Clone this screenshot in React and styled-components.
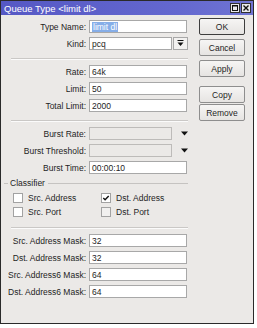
import React from 'react'
import styled, { createGlobalStyle } from 'styled-components'

const Global = createGlobalStyle`
  html, body {
    margin: 0;
    padding: 0;
    background: #fff;
  }
  body {
    font-family: "Liberation Sans", Arial, sans-serif;
    font-size: 8.5px;
    color: #1e1e1e;
  }
`

const Window = styled.div`
  box-sizing: border-box;
  width: 254px;
  height: 324px;
  border: 1px solid #2a2a2a;
  background: #ebe9e7;
  display: flex;
  flex-direction: column;
`

const TitleBar = styled.div`
  height: 14px;
  background: linear-gradient(to right, #5558c4, #6468cf 70%, #6f74d3);
  color: #fff;
  display: flex;
  align-items: center;
  padding: 0 2px 0 3px;
  font-size: 9.5px;
`

const TitleText = styled.span`
  flex: 1;
`

const TitleButton = styled.div`
  box-sizing: border-box;
  width: 10px;
  height: 10px;
  margin-left: 1px;
  background: #e9e9ec;
  border: 1px solid #303030;
  display: flex;
  align-items: center;
  justify-content: center;
`

const Body = styled.div`
  display: flex;
`

const FormColumn = styled.div`
  width: 187px;
  padding-top: 5px;
`

const ButtonColumn = styled.div`
  width: 46px;
  margin-left: 11px;
  padding-top: 3px;
  display: flex;
  flex-direction: column;
`

const DialogButton = styled.div`
  box-sizing: border-box;
  height: 17px;
  margin-top: ${p => p.$gap}px;
  border: 1px solid ${p => (p.$primary ? '#3d3d3d' : '#8e8e8e')};
  border-radius: 2px;
  background: linear-gradient(#f6f5f4, #e6e4e2);
  display: flex;
  align-items: center;
  justify-content: center;
  font-size: 8.5px;
`

const Row = styled.div`
  display: grid;
  grid-template-columns: 85px 83px 15px;
  column-gap: 3px;
  align-items: center;
  height: 13px;
  margin-bottom: 4px;
`

const Label = styled.span`
  text-align: right;
  white-space: nowrap;
`

const Input = styled.div`
  box-sizing: border-box;
  height: 13px;
  grid-column: ${p => (p.$wide ? '2 / 4' : '2')};
  width: ${p => (p.$wide ? 98 : 83)}px;
  background: ${p => (p.$disabled ? '#ebe9e7' : '#fff')};
  border: 1px solid ${p => (p.$disabled ? '#bdbbb9' : '#a8a8a8')};
  padding-left: 2px;
  display: flex;
  align-items: center;
  white-space: nowrap;
`

const Selected = styled.span`
  background: #86aee8;
  color: #fff;
  padding: 0 1px;
`

const DropButton = styled.div`
  box-sizing: border-box;
  margin-left: -2px;
  width: 15px;
  height: 13px;
  border: 1px solid #a8a8a8;
  background: #f2f1f0;
  display: flex;
  align-items: center;
  justify-content: center;
`

const DropArrow = styled.div`
  display: flex;
  align-items: center;
  justify-content: center;
  margin-left: 4px;
`

const Separator = styled.div`
  margin: 8px 0 5px 10px;
  width: 177px;
  border-top: 1px solid #cac8c6;
  border-bottom: 1px solid #fbfbfb;
`

const GroupTitle = styled.div`
  margin: 4px 0 5px 3px;
  display: flex;
  align-items: center;
  height: 10px;
  &::before {
    content: '';
    width: 4px;
    border-top: 1px solid #c5c3c1;
    margin-right: 2px;
  }
  &::after {
    content: '';
    flex: 1;
    border-top: 1px solid #c5c3c1;
    margin-left: 3px;
  }
`

const CheckGrid = styled.div`
  display: grid;
  grid-template-columns: 88px 88px;
  row-gap: 4px;
  padding-left: 12px;
`

const CheckItem = styled.label`
  display: flex;
  align-items: center;
  gap: 5px;
  height: 10px;
`

const Box = styled.span`
  box-sizing: border-box;
  width: 10px;
  height: 10px;
  border: 1px solid #a2a2a2;
  background: ${p => (p.$dim ? '#f1f0ef' : '#fff')};
  display: flex;
  align-items: center;
  justify-content: center;
`

const GroupEnd = styled(Separator)`
  margin-top: 10px;
`

const Field = ({ label, value, selected, disabled, drop }) => (
  <Row>
    <Label>{label}</Label>
    <Input $wide={!drop} $disabled={disabled}>
      {selected ? <Selected>{value}</Selected> : value}
    </Input>
    {drop === 'button' && (
      <DropButton>
        <svg width="7" height="7" viewBox="0 0 7 7">
          <rect x="0.5" y="0" width="6" height="1" fill="#111" />
          <path d="M0.5 2.5 H6.5 L3.5 6 Z" fill="#111" />
        </svg>
      </DropButton>
    )}
    {drop === 'arrow' && (
      <DropArrow>
        <svg width="7" height="5" viewBox="0 0 7 5">
          <path d="M0 0.5 H7 L3.5 4.5 Z" fill="#111" />
        </svg>
      </DropArrow>
    )}
  </Row>
)

const Check = ({ label, checked, dim }) => (
  <CheckItem>
    <Box $dim={dim}>
      {checked && (
        <svg width="8" height="8" viewBox="0 0 8 8">
          <path d="M1.3 4 L3.1 5.8 L6.7 2" stroke="#111" strokeWidth="1.4" fill="none" />
        </svg>
      )}
    </Box>
    {label}
  </CheckItem>
)

export default function App() {
  return (
    <>
      <Global />
      <Window>
        <TitleBar>
          <TitleText>Queue Type &lt;limit dl&gt;</TitleText>
          <TitleButton>
            <svg width="6" height="6" viewBox="0 0 6 6">
              <rect x="0.5" y="0.5" width="5" height="5" fill="none" stroke="#111" />
              <rect x="0" y="0" width="6" height="1.5" fill="#111" />
            </svg>
          </TitleButton>
          <TitleButton>
            <svg width="6" height="6" viewBox="0 0 6 6">
              <path d="M0.5 0.5 L5.5 5.5 M5.5 0.5 L0.5 5.5" stroke="#111" strokeWidth="1.4" />
            </svg>
          </TitleButton>
        </TitleBar>
        <Body>
          <FormColumn>
            <Field label="Type Name:" value="limit dl" selected />
            <Field label="Kind:" value="pcq" drop="button" />
            <Separator />
            <Field label="Rate:" value="64k" />
            <Field label="Limit:" value="50" />
            <Field label="Total Limit:" value="2000" />
            <Separator />
            <Field label="Burst Rate:" value="" disabled drop="arrow" />
            <Field label="Burst Threshold:" value="" disabled drop="arrow" />
            <Field label="Burst Time:" value="00:00:10" />
            <GroupTitle>Classifier</GroupTitle>
            <CheckGrid>
              <Check label="Src. Address" />
              <Check label="Dst. Address" checked />
              <Check label="Src. Port" />
              <Check label="Dst. Port" dim />
            </CheckGrid>
            <GroupEnd />
            <Field label="Src. Address Mask:" value="32" />
            <Field label="Dst. Address Mask:" value="32" />
            <Field label="Src. Address6 Mask:" value="64" />
            <Field label="Dst. Address6 Mask:" value="64" />
          </FormColumn>
          <ButtonColumn>
            <DialogButton $primary $gap={0}>OK</DialogButton>
            <DialogButton $gap={4}>Cancel</DialogButton>
            <DialogButton $gap={4}>Apply</DialogButton>
            <DialogButton $gap={9}>Copy</DialogButton>
            <DialogButton $gap={1}>Remove</DialogButton>
          </ButtonColumn>
        </Body>
      </Window>
    </>
  )
}
